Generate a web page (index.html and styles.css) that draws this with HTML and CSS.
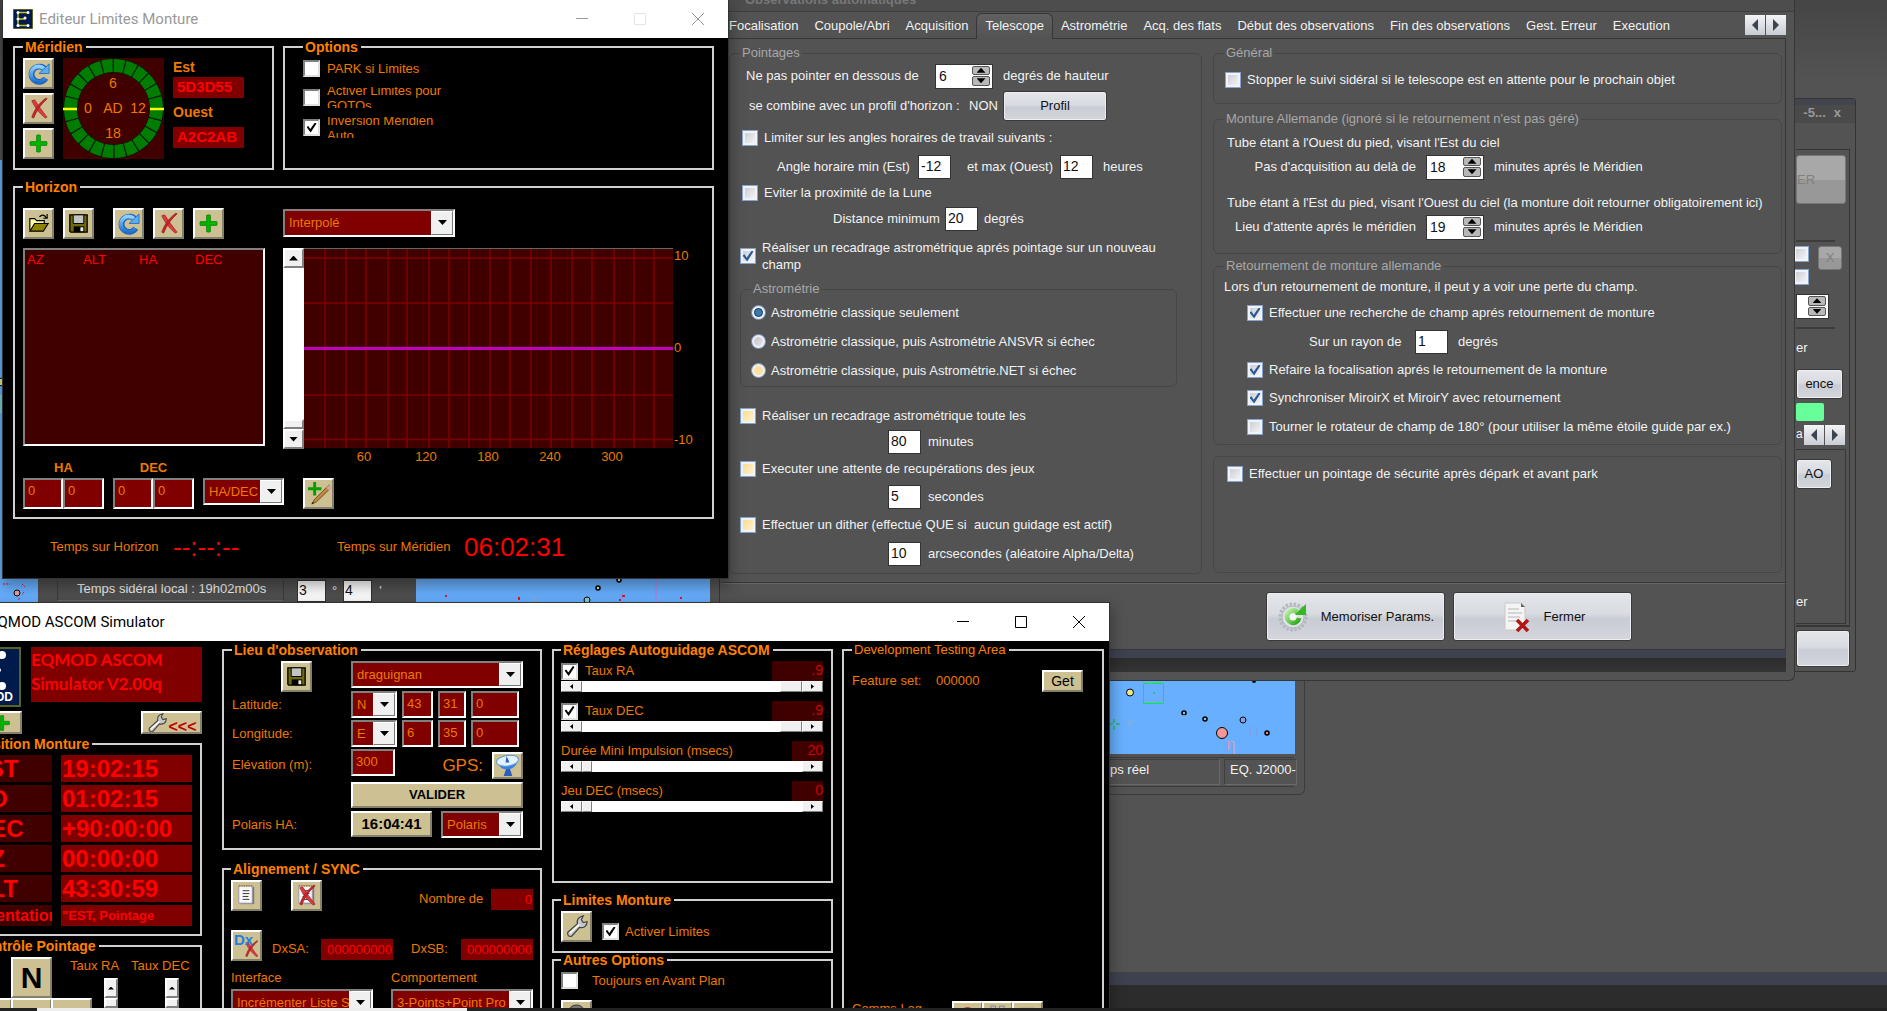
FILE: index.html
```html
<!DOCTYPE html>
<html lang="fr">
<head>
<meta charset="utf-8">
<title>EQMOD ASCOM Simulator</title>
<link rel="stylesheet" href="styles.css">
</head>
<body>
<svg class="defs" aria-hidden="true">
  <defs>
    <linearGradient id="g-blue" x1="0" y1="0" x2="0" y2="1"><stop offset="0" stop-color="#8fd0ff"/><stop offset="1" stop-color="#1f6fd0"/></linearGradient>
    <linearGradient id="g-green" x1="0" y1="0" x2="1" y2="1"><stop offset="0" stop-color="#b8f0a0"/><stop offset="1" stop-color="#2aa81a"/></linearGradient>
    <symbol id="i-refresh" viewBox="0 0 26 26"><path d="M20.500 9.500A8 8 0 1 0 20.500 18" fill="none" stroke="#1c62b8" stroke-width="6"/><path d="M20 9.500A8 8 0 1 0 20 18" fill="none" stroke="url(#g-blue)" stroke-width="4"/><path d="M24 3v10H13.500z" fill="#5aaef0" stroke="#1c62b8" stroke-width=".8"/></symbol>
    <symbol id="i-cross" viewBox="0 0 26 26"><path d="M6 5l3-1c4 6 8 12 13 18l-2 1C14 18 9 12 6 5z" fill="#e03a40" stroke="#8a1418" stroke-width=".6"/><path d="M22 3c-6 5-11 12-14 20l-2-1C9 13 15 6 21 2z" fill="#c8262c" stroke="#8a1418" stroke-width=".6"/></symbol>
    <symbol id="i-plus" viewBox="0 0 26 26"><path d="M11 4.500q2-1 4 0V11h6.500q1 2 0 4H15v6.500q-2 1-4 0V15H4.500q-1-2 0-4H11z" fill="#00b400" stroke="#007a00" stroke-width=".7"/></symbol>
    <symbol id="i-open" viewBox="0 0 26 26"><path d="M4 20V8h5l2 2h8v3" fill="#ffff9a" stroke="#000" stroke-width="1.200"/><path d="M4 21l5-8h14l-5 8z" fill="#8c8400" stroke="#000" stroke-width="1.200"/><path d="M14 6q4-4 7 1M22 3v4.500h-4" fill="none" stroke="#000" stroke-width="1.200"/></symbol>
    <symbol id="i-save" viewBox="0 0 26 26"><path d="M4 4h18v18H5l-1-1z" fill="#6f6a12" stroke="#000" stroke-width="1.400"/><path d="M7.500 4h11v9h-11z" fill="#c4c4c4" stroke="#000"/><path d="M8 16h11v6H8z" fill="#000"/><path d="M15 17h3v4h-3z" fill="#eee"/></symbol>
    <symbol id="i-pencil" viewBox="0 0 26 26"><path d="M9 1v14M2 8h14" stroke="#00a000" stroke-width="3"/><path d="M24 4L9 19l-3 5 5-2.500L25 8z" fill="#c08a40" stroke="#5a3a10" stroke-width=".8"/><path d="M24 4l-3 3 3 3 2-2z" fill="#d8a0a0"/><path d="M6 24l1-2 1.500 1z" fill="#000"/></symbol>
    <symbol id="i-wrench" viewBox="0 0 26 26"><path d="M4 19L14 10c-1-4 1-7 6-8l-2 4 2 3 4-1c0 5-4 7-8 6L8 23c-3 1-5-1-4-4z" fill="#c8c8c8" stroke="#444" stroke-width="1.300"/><path d="M6 20l10-9" stroke="#fff" stroke-width="1.500"/></symbol>
    <symbol id="i-note" viewBox="0 0 26 26"><path d="M7 4h14v18H7z" fill="#777"/><path d="M5 3h14v18H5z" fill="#f8f8f8" stroke="#99a"/><path d="M5 3h14" stroke="#a08040" stroke-width="2" stroke-dasharray="1.500 1"/><path d="M9 8h7M9 11h7M9 14h6M9 17h7" stroke="#333"/></symbol>
    <symbol id="i-dish" viewBox="0 0 26 26"><path d="M12 15l-3 9h9l-3-9z" fill="#2860b8"/><path d="M2 8q2 9 11 9t11-11z" fill="#3a80e0"/><ellipse cx="13" cy="8" rx="11.500" ry="5.500" transform="rotate(-8 13 8)" fill="#e4f2ff" stroke="#5a98d8"/><path d="M12 3l3 7h-4z" fill="#2860b8"/></symbol>
    <symbol id="i-gear" viewBox="0 0 32 32"><circle cx="16" cy="16" r="13" fill="none" stroke="#b4b7be" stroke-width="3" stroke-dasharray="2.500 1.600"/><circle cx="16" cy="16" r="11" fill="#dfe1e8" stroke="#b0b3ba"/><path d="M22 17a6 6 0 1 1-2-6" fill="none" stroke="url(#g-green)" stroke-width="5"/><path d="M29 3v11H17z" fill="#35b822"/><circle cx="16" cy="16" r="3.500" fill="#f6f6f8"/></symbol>
    <symbol id="i-doc" viewBox="0 0 32 32"><path d="M5 2h16l4 4v23H5q-3 1-4-1h4z" fill="#f4f4f4" stroke="#c8c8c8"/><path d="M21 2v4h4z" fill="#666"/><path d="M8 8h11M8 12h14M8 16h12M8 20h8" stroke="#ccc" stroke-width="1.500"/><path d="M17 19l11 11M28 19L17 30" stroke="#b01818" stroke-width="3.600"/></symbol>
    <symbol id="i-eq" viewBox="0 0 20 20"><path d="M.5.500h19v19H.5z" fill="#001a4c" stroke="#5a6420"/><path d="M15 3.500H5v13h10M5 10h7" fill="none" stroke="#c8c020" stroke-width="1.500"/><g fill="#fff"><circle cx="5" cy="3.500" r="1.500"/><circle cx="15" cy="3.500" r="1.500"/><circle cx="5" cy="10" r="1.500"/><circle cx="12" cy="9" r="1.500"/><circle cx="5" cy="16.500" r="1.500"/><circle cx="15" cy="16.500" r="1.500"/></g></symbol>
    <symbol id="i-min" viewBox="0 0 12 12"><path d="M0 5.500h12" stroke="currentColor"/></symbol>
    <symbol id="i-max" viewBox="0 0 12 12"><path d="M.5.500h11v11H.5z" fill="none" stroke="currentColor"/></symbol>
    <symbol id="i-close" viewBox="0 0 12 12"><path d="M0 0l12 12M12 0L0 12" stroke="currentColor"/></symbol>
  </defs>
</svg>

<main class="desktop">

  <!-- sky map showing between the windows -->
  <svg class="sky sky-left" viewBox="0 0 38 442" preserveAspectRatio="none" aria-hidden="true">
    <circle cx="2" cy="222" r="4" fill="#e8e890" stroke="#000"/><path d="M0 235h4v18H0z" fill="#80d0d0"/><circle cx="17" cy="433" r="3" fill="#f0a0a0" stroke="#000"/><path d="M3 424h7M22 424l3 3M24 432l-2 3M19 438v3" stroke="#f01030" stroke-dasharray="2 1"/>
  </svg>
  <section class="sidereal">
    <output class="sid-box">Temps sidéral local : 19h02m00s</output>
    <input class="white-in" aria-label="Degrés" value="3"><span>°</span>
    <input class="white-in" aria-label="Minutes" value="4"><span>'</span>
  </section>
  <svg class="sky sky-mid" viewBox="0 0 294 62" aria-hidden="true">
    <circle cx="182" cy="48" r="2" fill="#ddd" stroke="#000" stroke-width="1.500"/><circle cx="203" cy="40" r="2" fill="#ddd" stroke="#000" stroke-width="1.500"/><circle cx="171" cy="60" r="3" fill="#80d0d0" stroke="#000"/><path d="M240 38v24" stroke="#a090f0" stroke-width="2"/><path d="M30 55v2M103 57v3M206 56h3M203 60h2M265 57v2" stroke="#f01030" stroke-width="2"/><path d="M115 57l6 5M121 57l-6 5M0 43l4-4M0 43l4 4" stroke="#90b0c8"/>
  </svg>

  <section class="mapwin">
    <svg class="map" viewBox="0 0 205 133" aria-hidden="true">
      <circle cx="40" cy="71.500" r="3.500" fill="#e8e890" stroke="#000"/><path d="M53.500 62.500h20v20h-20z" fill="none" stroke="#00f020"/><path d="M63 72h2" stroke="#00c020"/><circle cx="94" cy="92" r="2" fill="#8cc" stroke="#000" stroke-width="1.500"/><circle cx="115" cy="98" r="2" fill="#8cc" stroke="#000" stroke-width="1.500"/><circle cx="153" cy="99" r="3" fill="#80a0e8" stroke="#000"/><circle cx="132" cy="112" r="5.500" fill="#f09898" stroke="#000"/><circle cx="177" cy="112" r="2" fill="#f08080" stroke="#000" stroke-width="1.500"/><path d="M24 98v4M24 105v4M20 103h3M26 103h4" stroke="#00c020"/><path d="M37 99l6 6M43 99l-6 6M91 96l3-2 3 2" stroke="#90b0c8" fill="none"/><circle cx="164" cy="60" r="2"/>
      <text x="157" y="115" class="star-blue">11</text><text x="136" y="129" class="star-red">η</text>
    </svg>
    <div class="statusbar"><span class="cell">ps réel</span><span class="cell">EQ. J2000-</span></div>
  </section>

  <section class="sidewin">
    <header><span>-5...</span><span>x</span></header>
    <div class="side-panel">
      <button class="dull tall" disabled>ER</button>
      <hr>
      <div class="side-checks">
        <div class="stack"><input type="checkbox" class="cb" aria-label="Option 1"><input type="checkbox" class="cb" aria-label="Option 2"></div>
        <button class="dull" disabled>X</button>
      </div>
      <span class="spin narrow"><input aria-label="Valeur" value=""><span class="ud"><button class="up" aria-label="Plus"></button><button class="dn" aria-label="Moins"></button></span></span>
      <hr>
      <span class="side-text">er</span>
      <button class="btn side-btn">ence</button>
      <div class="green"></div>
      <div class="side-nav"><span>a</span><button class="nav l" aria-label="Précédent"></button><button class="nav r" aria-label="Suivant"></button></div>
      <div class="side-sub"><button class="btn ao">AO</button><span class="side-text">er</span></div>
    </div>
    <button class="btn side-bottom" aria-label="Valider"></button>
  </section>

  <!-- automatic observations window -->
  <section class="obs">
    <header class="obs-title"><span>Observations automatiques</span></header>
    <nav class="tabs">
      <a href="#">Focalisation</a><a href="#">Coupole/Abri</a><a href="#">Acquisition</a><a href="#" class="on">Telescope</a><a href="#">Astrométrie</a><a href="#">Acq. des flats</a><a href="#">Début des observations</a><a href="#">Fin des observations</a><a href="#">Gest. Erreur</a><a href="#">Execution</a>
      <span class="tab-nav"><button class="nav l" aria-label="Onglet précédent"></button><button class="nav r" aria-label="Onglet suivant"></button></span>
    </nav>
    <div class="obs-page">
      <fieldset class="og pointages">
        <legend>Pointages</legend>
        <div class="row r-alt"><label for="alt">Ne pas pointer en dessous de</label><span class="spin"><input id="alt" value="6"><span class="ud"><button class="up" aria-label="Plus"></button><button class="dn" aria-label="Moins"></button></span></span><span>degrés de hauteur</span></div>
        <div class="row r-prof"><span>se combine avec un profil d'horizon :</span><span>NON</span><button class="btn">Profil</button></div>
        <label class="row opt in"><input type="checkbox" class="cb">Limiter sur les angles horaires de travail suivants :</label>
        <div class="row r-ang"><label for="amin">Angle horaire min (Est)</label><input id="amin" class="white-in" value="-12"><label for="amax">et max (Ouest)</label><input id="amax" class="white-in" value="12"><span>heures</span></div>
        <label class="row opt in"><input type="checkbox" class="cb">Eviter la proximité de la Lune</label>
        <div class="row r-dist"><label for="dist">Distance minimum</label><input id="dist" class="white-in" value="20"><span>degrés</span></div>
        <label class="row opt two"><input type="checkbox" class="cb" checked><span>Réaliser un recadrage astrométrique aprés pointage sur un nouveau<br>champ</span></label>
        <fieldset class="og astro">
          <legend>Astrométrie</legend>
          <label><input type="radio" name="astro" class="rb" checked>Astrométrie classique seulement</label>
          <label><input type="radio" name="astro" class="rb">Astrométrie classique, puis Astrométrie ANSVR si échec</label>
          <label><input type="radio" name="astro" class="rb hot">Astrométrie classique, puis Astrométrie.NET si échec</label>
        </fieldset>
        <label class="row opt"><input type="checkbox" class="cb hot">Réaliser un recadrage astrométrique toute les</label>
        <div class="row r-sub"><input class="white-in" aria-label="minutes" value="80"><span>minutes</span></div>
        <label class="row opt"><input type="checkbox" class="cb hot">Executer une attente de recupérations des jeux</label>
        <div class="row r-sub"><input class="white-in" aria-label="secondes" value="5"><span>secondes</span></div>
        <label class="row opt"><input type="checkbox" class="cb hot">Effectuer un dither (effectué QUE si&nbsp; aucun guidage est actif)</label>
        <div class="row r-sub"><input class="white-in" aria-label="arcsecondes" value="10"><span>arcsecondes (aléatoire Alpha/Delta)</span></div>
      </fieldset>
      <div class="obs-right">
        <fieldset class="og general"><legend>Général</legend>
          <label class="row opt"><input type="checkbox" class="cb">Stopper le suivi sidéral si le telescope est en attente pour le prochain objet</label>
        </fieldset>
        <fieldset class="og monture"><legend>Monture Allemande (ignoré si le retournement n'est pas géré)</legend>
          <div class="case"><p>Tube étant à l'Ouest du pied, visant l'Est du ciel</p>
            <div class="r-min"><label for="m1">Pas d'acquisition au delà de</label><span class="spin"><input id="m1" value="18"><span class="ud"><button class="up" aria-label="Plus"></button><button class="dn" aria-label="Moins"></button></span></span><span>minutes aprés le Méridien</span></div></div>
          <div class="case"><p>Tube étant à l'Est du pied, visant l'Ouest du ciel (la monture doit retourner obligatoirement ici)</p>
            <div class="r-min"><label for="m2">Lieu d'attente aprés le méridien</label><span class="spin"><input id="m2" value="19"><span class="ud"><button class="up" aria-label="Plus"></button><button class="dn" aria-label="Moins"></button></span></span><span>minutes aprés le Méridien</span></div></div>
        </fieldset>
        <fieldset class="og retour"><legend>Retournement de monture allemande</legend>
          <p>Lors d'un retournement de monture, il peut y a voir une perte du champ.</p>
          <label class="opt"><input type="checkbox" class="cb" checked>Effectuer une recherche de champ aprés retournement de monture</label>
          <div class="r-ray"><label for="ray">Sur un rayon de</label><input id="ray" class="white-in" value="1"><span>degrés</span></div>
          <label class="opt"><input type="checkbox" class="cb" checked>Refaire la focalisation aprés le retournement de la monture</label>
          <label class="opt"><input type="checkbox" class="cb" checked>Synchroniser MiroirX et MiroirY avec retournement</label>
          <label class="opt"><input type="checkbox" class="cb">Tourner le rotateur de champ de 180° (pour utiliser la même étoile guide par ex.)</label>
        </fieldset>
        <div class="og secu"><label class="opt"><input type="checkbox" class="cb">Effectuer un pointage de sécurité après dépark et avant park</label></div>
      </div>
    </div>
    <div class="obs-actions">
      <button class="btn"><svg width="32" height="32"><use href="#i-gear"/></svg>Memoriser Params.</button>
      <button class="btn"><svg width="32" height="32"><use href="#i-doc"/></svg>Fermer</button>
    </div>
    <footer class="obs-foot"></footer>
  </section>

  <!-- mount limits editor -->
  <section class="win editor">
    <header class="titlebar off"><svg width="20" height="20"><use href="#i-eq"/></svg><h1>Editeur Limites Monture</h1>
      <button aria-label="Réduire"><svg width="12" height="12"><use href="#i-min"/></svg></button><button class="faint" aria-label="Agrandir"><svg width="12" height="12"><use href="#i-max"/></svg></button><button aria-label="Fermer"><svg width="12" height="12"><use href="#i-close"/></svg></button></header>
    <div class="ed-body">
      <div class="ed-top">
        <fieldset class="gb meridien"><legend>Méridien</legend>
          <div class="mer">
            <div class="stack"><button class="tb" aria-label="Rafraîchir"><svg><use href="#i-refresh"/></svg></button><button class="tb" aria-label="Effacer"><svg><use href="#i-cross"/></svg></button><button class="tb" aria-label="Ajouter"><svg><use href="#i-plus"/></svg></button></div>
            <svg class="dial" width="101" height="101" viewBox="0 0 101 101"><path d="M0 0h101v101H0z" fill="#400000"/><circle cx="50.500" cy="50.500" r="43" fill="none" stroke="#001800" stroke-width="14"/><circle cx="50.500" cy="50.500" r="43" fill="none" stroke="#007c00" stroke-width="13" stroke-dasharray="10.060 1.200"/><path d="M0 51h14M87 51h14" stroke="#ff0" stroke-width="2.500"/><g class="dial-t"><text x="50" y="30">6</text><text x="25" y="55">0</text><text x="50" y="55">AD</text><text x="75" y="55">12</text><text x="50" y="80">18</text></g></svg>
            <div class="mer-vals"><b>Est</b><output class="red">5D3D55</output><b>Ouest</b><output class="red">A2C2AB</output></div>
          </div>
        </fieldset>
        <fieldset class="gb options"><legend>Options</legend>
          <label><input type="checkbox" class="wc"><span>PARK si Limites</span></label>
          <label><input type="checkbox" class="wc"><span>Activer Limites pour<br>GOTOs</span></label>
          <label><input type="checkbox" class="wc" checked><span>Inversion Méridien<br>Auto</span></label>
        </fieldset>
      </div>
      <fieldset class="gb horizon"><legend>Horizon</legend>
        <div class="hz">
          <div class="hz-left">
            <div class="toolbar"><button class="tb" aria-label="Ouvrir"><svg><use href="#i-open"/></svg></button><button class="tb" aria-label="Enregistrer"><svg><use href="#i-save"/></svg></button><i></i><button class="tb" aria-label="Rafraîchir"><svg><use href="#i-refresh"/></svg></button><button class="tb" aria-label="Effacer"><svg><use href="#i-cross"/></svg></button><button class="tb" aria-label="Ajouter"><svg><use href="#i-plus"/></svg></button></div>
            <div class="list"><table><tr><th>AZ</th><th>ALT</th><th>HA</th><th>DEC</th></tr></table></div>
            <div class="entry"><div><b>HA</b><span class="pair"><input class="ri" aria-label="HA heures" value="0"><input class="ri" aria-label="HA minutes" value="0"></span></div><div><b>DEC</b><span class="pair"><input class="ri" aria-label="DEC degrés" value="0"><input class="ri" aria-label="DEC minutes" value="0"></span></div><span class="combo c-hadec"><select aria-label="Coordonnées"><option>HA/DEC</option></select></span></div>
          </div>
          <div class="hz-right">
            <span class="combo c-interp"><select aria-label="Mode"><option>Interpolé</option></select></span>
            <div class="chart">
              <div class="vscroll"><button class="up" aria-label="Haut"></button><span></span><i></i><button class="dn" aria-label="Bas"></button></div>
              <svg class="plot" width="369" height="200" viewBox="0 0 369 200"><path d="M0 0h369v200H0z" fill="#400000"/><path d="M0 .5h369" stroke="#666"/><path d="M21 1v199M42 1v199M62 1v199M84 1v199M103 1v199M125 1v199M145 1v199M165 1v199M186 1v199M206 1v199M227 1v199M247 1v199M268 1v199M288 1v199M310 1v199M330 1v199M350 1v199M0 10h369M0 55h369M0 147h369M0 191.500h369" stroke="#800000" stroke-width="1.500"/><path d="M0 100.500h369" stroke="#c000c0" stroke-width="3"/></svg>
              <div class="ylab"><span>10</span><span>0</span><span>-10</span></div>
              <div class="xlab"><span>60</span><span>120</span><span>180</span><span>240</span><span>300</span></div>
            </div>
            <button class="tb pen" aria-label="Modifier"><svg><use href="#i-pencil"/></svg></button>
          </div>
        </div>
      </fieldset>
      <div class="ed-foot"><span>Temps sur Horizon</span><output>--:--:--</output><span>Temps sur Méridien</span><output>06:02:31</output></div>
    </div>
  </section>

  <!-- EQMOD driver window -->
  <section class="win eqmod">
    <header class="titlebar"><svg width="20" height="20"><use href="#i-eq"/></svg><h1>EQMOD ASCOM Simulator</h1>
      <button aria-label="Réduire"><svg width="12" height="12"><use href="#i-min"/></svg></button><button aria-label="Agrandir"><svg width="12" height="12"><use href="#i-max"/></svg></button><button aria-label="Fermer"><svg width="12" height="12"><use href="#i-close"/></svg></button></header>
    <div class="eq-body">
      <div class="col-a">
        <div class="brand"><svg class="logo" width="60" height="60" viewBox="0 0 60 60"><path d="M1 1h58v58H1z" fill="#001a4c" stroke="#5a6420" stroke-width="2"/><g fill="#fff"><circle cx="41" cy="8" r="4"/><circle cx="41" cy="39" r="4"/><circle cx="38" cy="23" r="2"/></g><text x="52" y="54" text-anchor="end">EQMOD</text></svg><h2>EQMOD ASCOM<br>Simulator V2.00q</h2></div>
        <div class="brand-tools"><button class="tb flat" aria-label="Ajouter"><svg><use href="#i-plus"/></svg></button><button class="tb flat tools" aria-label="Réglages"><svg><use href="#i-wrench"/></svg><b>&lt;&lt;&lt;</b></button></div>
        <fieldset class="gb position"><legend>Position Monture</legend>
          <table><tr><th>LST</th><td>19:02:15</td></tr><tr><th>AD</th><td>01:02:15</td></tr><tr><th>DEC</th><td>+90:00:00</td></tr><tr><th>AZ</th><td>00:00:00</td></tr><tr><th>ALT</th><td>43:30:59</td></tr><tr class="small"><th>Orientation</th><td>"EST, Pointage</td></tr></table>
        </fieldset>
        <fieldset class="gb controle"><legend>Contrôle Pointage</legend>
          <div class="ctl">
            <div class="pad"><i></i><button class="tb big">N</button><i></i><button class="tb big">E</button><button class="tb big stop" aria-label="Stop"></button><button class="tb big">O</button></div>
            <div class="rate"><span>Taux RA</span><div class="vscroll slim"><button class="up" aria-label="Plus"></button><i></i><span></span></div></div>
            <div class="rate"><span>Taux DEC</span><div class="vscroll slim"><button class="up" aria-label="Plus"></button><i></i><span></span></div></div>
          </div>
        </fieldset>
      </div>
      <div class="col-b">
        <fieldset class="gb lieu"><legend>Lieu d'observation</legend>
          <div class="lieu-grid">
            <button class="tb site-save" aria-label="Enregistrer"><svg><use href="#i-save"/></svg></button><span class="combo"><select aria-label="Site"><option>draguignan</option></select></span>
            <span>Latitude:</span><div class="coord"><span class="combo"><select aria-label="Nord/Sud"><option>N</option></select></span><input class="ri" aria-label="Degrés" value="43"><input class="ri" aria-label="Minutes" value="31"><input class="ri" aria-label="Secondes" value="0"></div>
            <span>Longitude:</span><div class="coord"><span class="combo"><select aria-label="Est/Ouest"><option>E</option></select></span><input class="ri" aria-label="Degrés" value="6"><input class="ri" aria-label="Minutes" value="35"><input class="ri" aria-label="Secondes" value="0"></div>
            <label for="elev">Elévation (m):</label><div class="elev"><input class="ri" id="elev" value="300"><span class="gps">GPS:</span><button class="tb" aria-label="GPS"><svg><use href="#i-dish"/></svg></button></div>
            <i></i><button class="tb word">VALIDER</button>
            <span class="pol-label">Polaris HA:</span><div class="polaris"><button class="tb word clock">16:04:41</button><span class="combo"><select aria-label="Etoile"><option>Polaris</option></select></span></div>
          </div>
        </fieldset>
        <fieldset class="gb align"><legend>Alignement / SYNC</legend>
          <div class="al-1"><button class="tb" aria-label="Liste"><svg><use href="#i-note"/></svg></button><button class="tb over" aria-label="Effacer la liste"><svg viewBox="0 0 26 26"><use href="#i-note"/><use href="#i-cross"/></svg></button><span>Nombre de</span><output class="red">0</output></div>
          <div class="al-2"><button class="tb dx" aria-label="Effacer Dx"><b>Dx</b><svg><use href="#i-cross"/></svg></button><span>DxSA:</span><output class="red">000000000</output><span>DxSB:</span><output class="red">000000000</output></div>
          <div class="al-3"><label>Interface<span class="combo"><select><option>Incrémenter Liste S</option></select></span></label><label>Comportement<span class="combo"><select><option>3-Points+Point Pro</option></select></span></label></div>
        </fieldset>
      </div>
      <div class="col-c">
        <fieldset class="gb guide"><legend>Réglages Autoguidage ASCOM</legend>
          <div class="g-row"><label><input type="checkbox" class="wc" checked>Taux RA</label><output class="w-l">.9</output></div>
          <div class="hscroll"><button class="l" aria-label="Moins"></button><input type="range" class="wide" aria-label="Taux RA" min="0" max="10" value="10"><button class="r" aria-label="Plus"></button></div>
          <div class="g-row"><label><input type="checkbox" class="wc" checked>Taux DEC</label><output class="w-l">.9</output></div>
          <div class="hscroll"><button class="l" aria-label="Moins"></button><input type="range" class="wide" aria-label="Taux DEC" min="0" max="10" value="10"><button class="r" aria-label="Plus"></button></div>
          <div class="g-row"><span>Durée Mini Impulsion (msecs)</span><output>20</output></div>
          <div class="hscroll"><button class="l" aria-label="Moins"></button><input type="range" aria-label="Durée" min="0" max="10" value="0"><button class="r" aria-label="Plus"></button></div>
          <div class="g-row"><span>Jeu DEC (msecs)</span><output>0</output></div>
          <div class="hscroll"><button class="l" aria-label="Moins"></button><input type="range" aria-label="Jeu DEC" min="0" max="10" value="0"><button class="r" aria-label="Plus"></button></div>
        </fieldset>
        <fieldset class="gb limites"><legend>Limites Monture</legend>
          <div><button class="tb" aria-label="Editer"><svg><use href="#i-wrench"/></svg></button><label><input type="checkbox" class="wc" checked>Activer Limites</label></div>
        </fieldset>
        <fieldset class="gb autres"><legend>Autres Options</legend>
          <label><input type="checkbox" class="wc">Toujours en Avant Plan</label>
          <button class="tb" aria-label="Options"><svg viewBox="0 0 26 26"><circle cx="13" cy="11" r="9" fill="#777" stroke="#333"/></svg></button>
        </fieldset>
      </div>
      <fieldset class="gb dev"><legend>Development Testing Area</legend>
        <div class="feat"><span>Feature set:</span><span>000000</span><button class="tb get">Get</button></div>
        <div class="comms"><span>Comms Log</span><button class="tb" aria-label="Enregistrer"><svg viewBox="0 0 26 26"><circle cx="13" cy="10" r="7" fill="#b04848"/></svg></button><button class="tb" aria-label="Pause"><svg viewBox="0 0 26 26"><path d="M6 2h5v16H6zM15 2h5v16h-5z" fill="#bbb" stroke="#888"/></svg></button><button class="tb" aria-label="Stop"><svg viewBox="0 0 26 26"><path d="M6 4h14v14H6z" fill="#b04848"/></svg></button></div>
      </fieldset>
    </div>
  </section>

  <footer class="taskbar"><span></span></footer>
</main>
</body>
</html>
```
FILE: styles.css
```css
* { box-sizing: border-box; }
html, body { height: 100%; }
body { margin: 0; overflow: hidden; font: 13px/18px "Liberation Sans", Arial, sans-serif; color: #f2f2f2; }
p, h1, h2 { margin: 0; font: inherit; }
button, input, select { font: inherit; color: inherit; margin: 0; padding: 0; border: 0; border-radius: 0; }
a { color: inherit; text-decoration: none; }
i { display: block; }
svg { display: block; flex: none; }
.defs { position: absolute; width: 0; height: 0; }

.desktop { position: relative; height: 100vh; overflow: hidden; background: linear-gradient(#454545, #535353 80px); }
.desktop::before { content: ""; position: absolute; left: 0; right: 0; bottom: 3px; height: 35px; border-top: 1px solid #444; background: linear-gradient(#3e4250 0 12px, #2c2c2c 12px); }

/* sky map */
.sky { position: absolute; background: #68b0ff; }
.sky-left { left: 0; top: 160px; width: 38px; height: 442px; }
.sky-mid { left: 416px; top: 540px; width: 294px; height: 62px; }
.sidereal { position: absolute; left: 38px; top: 578px; width: 378px; height: 25px; display: flex; align-items: center; padding-left: 19px; background: #505050; }
.sidereal span { width: 17px; text-align: center; }
.sid-box { width: 227px; height: 20px; padding-left: 19px; margin-right: 13px; border: 1px solid #3c3c3c; border-top: 0; border-bottom-color: #666; line-height: 16px; }
.sidereal .white-in { width: 29px; height: 22px; padding-left: 1px; }

.mapwin { position: absolute; left: 1079px; top: 600px; width: 226px; padding: 20px 10px 7px; border: 1px solid #3c3c3c; border-radius: 0 0 6px 6px; background: #535353; }
.map { width: 205px; height: 133px; background: #68b0ff; }
.star-blue { font: 14px "Liberation Serif", serif; fill: #80a0e8; }
.star-red { font: 18px "Liberation Serif", serif; fill: #d89ab8; }
.statusbar { display: grid; grid-template-columns: 130px 1fr; gap: 4px; margin-top: 3px; padding: 1px 0; border: solid #3c3c3c; border-width: 1px 0; }
.cell { height: 26px; line-height: 20px; border: 1px solid #3f3f3f; border-right-color: #6a6a6a; border-bottom-color: #6a6a6a; padding-left: 5px; white-space: nowrap; }
.cell:first-child { padding-left: 19px; }

/* partly covered window on the right */
.sidewin { position: absolute; left: 1780px; top: 98px; width: 76px; height: 574px; padding: 0 5px 0 15px; background: #535353; border: 1px solid #333; border-radius: 0 3px 3px 0; }
.sidewin header { display: flex; justify-content: flex-end; gap: 8px; height: 50px; padding: 5px 14px; margin: 0 -5px 0 -15px; color: #999; font-weight: bold; background: linear-gradient(#42444e 0 6px, #4a4a4a 6px 24px, #535353 24px); }
.side-panel { height: 478px; border: solid #363636; border-width: 1px 1px 2px 0; padding: 5px 0; }
.sidewin hr { border: 0; border-top: 2px solid #3c3c3c; margin: 0 14px 0 0; }
.dull { background: linear-gradient(#a8a8a8 50%, #989898 50%); color: #808080; border: 1px solid #777; border-radius: 3px; text-align: left; }
.tall { width: 50px; height: 49px; margin-bottom: 36px; }
.side-checks { display: flex; gap: 9px; margin: 4px 0 9px -3px; }
.side-checks .stack { gap: 7px; }
.side-checks .dull { width: 24px; height: 24px; text-align: center; }
.spin.narrow { width: 33px; margin-bottom: 8px; }
.side-text { display: block; margin: 11px 0 13px; line-height: 16px; }
.side-btn { width: 47px; height: 30px; }
.green { width: 28px; height: 18px; margin-top: 4px; background: #66ff9a; border-radius: 2px; }
.side-nav { display: flex; gap: 1px; margin: 4px 0; height: 20px; }
.side-nav span { width: 7px; font-size: 12px; }
.side-sub { height: 175px; width: 50px; padding-top: 9px; border: solid #363636; border-width: 1px 1px 1px 0; }
.ao { width: 36px; height: 30px; }
.side-sub .side-text { margin-top: 105px; }
.side-bottom { width: 54px; height: 37px; margin-top: 3px; }

/* automatic observations window */
.obs { position: absolute; left: 719px; top: 0; width: 1076px; background: #535353; border: 1px solid #363636; border-top: 0; border-radius: 0 0 6px 0; padding: 0 8px 8px 2px; }
.obs-title { height: 12px; overflow: hidden; border-bottom: 1px solid #3e3e3e; margin: 0 -8px 0 -2px; color: #777; line-height: 0; padding-left: 25px; font-weight: bold; background: #4d4d4d; }
.obs-title span { display: block; }
.tabs { display: flex; height: 27px; padding-top: 1px; border-bottom: 1px solid #363636; line-height: 26px; white-space: nowrap; }
.tabs a { padding: 0 8px; flex: none; }
.tabs a:first-child { padding-left: 7px; }
.tabs .on { border: 1px solid #363636; border-bottom: 0; border-radius: 6px 6px 0 0; background: linear-gradient(#606060, #535353); height: 26px; line-height: 24px; }
.tab-nav { margin-left: auto; display: flex; gap: 1px; padding-top: 2px; }
.nav { width: 20px; height: 20px; background: linear-gradient(#f4f4f6, #c8ccd4); display: grid; place-items: center; flex: none; }
.nav::before { content: ""; width: 6px; height: 12px; background: #3c4450; clip-path: polygon(0 50%, 100% 0, 100% 100%); }
.nav.r::before { clip-path: polygon(100% 50%, 0 0, 0 100%); }
.obs-page { display: grid; grid-template-columns: 473px 1fr; gap: 11px; padding: 5px 3px 8px 7px; border-right: 1px solid #363636; }
.og { min-width: 0; margin: 0; border: 1px solid #464646; border-radius: 6px; padding: 0 10px; }
.og legend { color: #a8a8a8; padding: 0 2px; line-height: 18px; white-space: nowrap; }
.og label, .og p, .og span { white-space: nowrap; }
.row { display: grid; align-items: center; }
.opt { display: flex; align-items: center; gap: 6px; }
.pointages { display: grid; grid-template-rows: 28px 32px 32px 26px 26px 26px 48px 121px 29px 23px 32px 23px 34px 16px; height: 530px; align-content: start; }
.opt.in { padding-left: 2px; }
.two { line-height: 17px; }
.r-alt { grid-template-columns: 189px 68px 1fr; padding-left: 6px; }
.r-prof { grid-template-columns: 220px 34px 104px; padding-left: 9px; }
.r-prof .btn { height: 30px; }
.r-ang { grid-template-columns: 141px 49px 93px 43px 1fr; padding-left: 37px; }
.r-dist { grid-template-columns: 112px 39px 1fr; padding-left: 93px; }
.r-sub { grid-template-columns: 40px 1fr; padding-left: 148px; }
.astro { height: 107px; width: 437px; display: grid; align-content: start; grid-auto-rows: 29px; }
.astro label { display: flex; align-items: center; gap: 5px; }
.obs-right { display: grid; align-content: start; grid-template-rows: 66px 147px 199px 118px; }
.general { height: 60px; }
.general .row { height: 36px; padding-left: 1px; }
.monture { height: 144px; padding-top: 2px; }
.case { display: grid; grid-template-rows: 25px 24px; align-items: center; margin-bottom: 11px; padding-left: 3px; }
.r-min { display: grid; grid-template-columns: 199px 68px 1fr; align-items: center; }
.r-min label { justify-self: end; padding-right: 10px; }
.retour { height: 188px; display: grid; grid-template-rows: 24px 28px 30px 26px 30px 28px; align-items: center; align-content: start; }
.retour .opt { padding-left: 23px; }
.r-ray { display: grid; grid-template-columns: 106px 43px 1fr; padding-left: 85px; align-items: center; }
.secu { height: 117px; padding: 8px 13px; }
.white-in { width: 33px; height: 24px; background: #fff; color: #111; border: 1px solid #333; padding: 0 0 2px 2px; min-width: 0; font-size: 14px; }
.spin { display: flex; width: 58px; height: 25px; background: #fff; border: 1px solid #333; padding: 1px 2px 2px 0; }
.spin input { flex: 1; min-width: 0; width: 0; color: #111; background: #fff; padding-left: 3px; font-size: 14px; }
.ud { display: grid; width: 18px; gap: 1px; }
.ud button { background: #b8b8b8; border: 1px solid #555; border-radius: 2px; display: grid; place-items: center; }
.up::before, .dn::before { content: ""; width: 9px; height: 5px; background: #000; clip-path: polygon(50% 0, 100% 100%, 0 100%); }
.dn::before { clip-path: polygon(0 0, 100% 0, 50% 100%); }
.cb, .rb, .wc { appearance: none; flex: none; display: grid; place-items: center; }
.cb { width: 16px; height: 16px; background: linear-gradient(135deg, #c4c8d0, #fafafa); border: 1px solid #88a4cc; box-shadow: inset 0 0 0 2px #f0f4fa; }
.cb.hot { background: linear-gradient(135deg, #fbd98a, #fff6da); }
.cb:checked::before, .wc:checked::before { content: ""; width: 11px; height: 11px; background: #2c5a94; clip-path: polygon(0 45%, 18% 35%, 38% 65%, 84% 0, 100% 10%, 42% 100%); }
.rb { width: 15px; height: 15px; border-radius: 50%; background: linear-gradient(135deg, #b8bcc4, #eee); border: 1px solid #7f9cc4; box-shadow: inset 0 0 0 2px #eef2f8; }
.rb.hot { background: #fce0a0; }
.rb:checked::before { content: ""; width: 7px; height: 7px; border-radius: 50%; background: #3c78b0; border: 1px solid #1a3c68; }
.btn { display: flex; align-items: center; justify-content: center; color: #111; border-radius: 3px; border: 1px solid #3a3a3a; background: linear-gradient(#e4e6ea, #d8dbe0 45%, #c8ccd4 55%, #d4d6dc); box-shadow: inset 0 0 0 1px #eceef2; }
.obs-actions { display: flex; gap: 8px; height: 68px; padding: 9px 0 9px 544px; border: solid #363636; border-width: 1px 1px 1px 0; box-shadow: inset 0 1px #666; }
.obs-actions .btn { width: 179px; height: 49px; gap: 12px; }
.obs-foot { height: 22px; background: linear-gradient(#3e4250 0 8px, #2c2c2c 8px, #343434); }

/* black windows */
.win { position: absolute; background: #000; color: #ee7800; font: 13px/16px "Liberation Sans", Arial, sans-serif; box-shadow: 0 0 0 1px #333, 0 6px 14px 2px rgba(0,0,0,.35); overflow: hidden; }
.titlebar { display: flex; align-items: center; height: 38px; padding: 0 1px 0 10px; background: #fff; color: #000; }
.titlebar h1 { flex: 1; padding-left: 6px; font: 15px/20px Roboto, sans-serif; }
.titlebar.off { color: #999; }
.titlebar button { width: 58px; height: 38px; background: none; display: grid; place-items: center; }
.titlebar .faint { color: #e4e4e4; }
.gb { min-width: 0; margin: 0; border: 2px solid #d0d0d0; padding: 2px 8px; }
.gb legend { padding: 0 3px 0 2px; font-weight: bold; font-size: 14px; line-height: 16px; color: #ff8000; white-space: nowrap; }
.tb { width: 31px; height: 31px; background: #cdc193; color: #000; border: 2px solid; border-color: #fff #85806a #85806a #fff; display: flex; align-items: center; justify-content: center; flex: none; overflow: hidden; }
.tb svg { width: 25px; height: 25px; }
.stack { display: grid; gap: 4px; }
.red { background: #800000; color: #ff0000; }
.wc { width: 17px; height: 17px; background: #fff; border: 2px solid; border-color: #808080 #e0e0e0 #e0e0e0 #808080; }
.wc:checked::before { width: 10px; height: 10px; background: #000; }
.ri { min-width: 0; width: 100%; height: 27px; background: #800000; color: #ee7800; border: 2px solid; border-color: #808080 #fff #fff #808080; padding: 0 0 3px 3px; }
.combo { position: relative; display: block; height: 27px; border: 2px solid; border-color: #808080 #fff #fff #808080; background: #800000; }
.combo select { appearance: none; width: 100%; height: 100%; background: none; color: #ee7800; padding: 0 20px 0 4px; overflow: hidden; }
.combo::before { content: ""; position: absolute; right: 0; top: 0; bottom: 0; width: 20px; background: #f0f0f0; border: 1px solid; border-color: #fff #777 #777 #fff; pointer-events: none; }
.combo::after { content: ""; position: absolute; right: 6px; top: 9px; width: 9px; height: 5px; background: #000; clip-path: polygon(0 0, 100% 0, 50% 100%); pointer-events: none; }

.editor { left: 3px; top: 0; width: 725px; height: 578px; }
.ed-body { padding: 1px 14px 0 10px; }
.ed-top { display: grid; grid-template-columns: 261px 1fr; gap: 9px; }
.meridien, .options { height: 131px; }
.meridien { padding-top: 3px; }
.mer { display: flex; gap: 9px; }
.mer-vals { display: grid; grid-template-rows: 17px 24px 26px 24px; width: 71px; align-items: center; }
.mer-vals b { font-size: 14px; }
.mer-vals .red { font: bold 15px/20px "Liberation Sans", sans-serif; height: 21px; padding-left: 4px; }
.dial-t { font-size: 14px; fill: #ee7800; text-anchor: middle; }
.options { padding: 0 18px; display: grid; grid-template-rows: 27px 31px 29px; align-content: start; }
.options label { display: flex; align-items: center; gap: 7px; line-height: 15px; }
.options label span { max-height: 21px; overflow: hidden; display: grid; align-content: center; }
.horizon { height: 340px; margin-top: 9px; padding-top: 13px; }
.hz { display: grid; grid-template-columns: 260px 1fr; }
.toolbar { display: flex; gap: 9px; height: 40px; }
.toolbar i { width: 1px; }
.list { width: 242px; height: 198px; background: #400000; border: 2px solid; border-color: #808080 #fff #fff #808080; }
.list table { border-collapse: collapse; table-layout: fixed; width: 224px; margin-left: 2px; }
.list th { padding: 1px 0; text-align: left; font-weight: normal; color: #f00; line-height: 18px; }
.entry { display: flex; gap: 9px; align-items: flex-end; height: 63px; }
.entry b { display: block; text-align: center; line-height: 20px; }
.pair { display: grid; grid-template-columns: 40px 41px; height: 31px; }
.pair .ri { height: 31px; padding-bottom: 6px; }
.entry .combo { width: 81px; margin-bottom: 4px; flex: none; }
.entry select { padding-right: 0; }
.c-interp { width: 172px; height: 28px; margin: 1px 0 11px; }
.chart { display: grid; grid-template-columns: 21px 369px 1fr; grid-template-rows: 201px 20px; }
.vscroll { display: flex; flex-direction: column; background: #fff; }
.vscroll span { flex: 1; }
.vscroll button, .vscroll i { background: #f0f0f0; border: 2px solid; border-color: #fff #808080 #808080 #fff; height: 20px; display: grid; place-items: center; }
.vscroll i { height: 10px; }
.ylab { display: flex; flex-direction: column; justify-content: space-between; padding-left: 1px; height: 200px; }
.xlab { grid-column: 2; display: grid; grid-template-columns: repeat(5, 62px); padding-left: 29px; text-align: center; line-height: 16px; }
.pen { margin: 9px 0 0 20px; }
.ed-foot { display: grid; grid-template-columns: 123px 164px 127px 1fr; align-items: center; height: 52px; padding-left: 37px; margin-top: 2px; }
.ed-foot output { color: #f00; font-size: 26px; line-height: 28px; }

.eqmod { left: -47px; top: 603px; bottom: 3px; width: 1156px; }
.eq-body { display: grid; grid-template-columns: 249px 320px 281px 261px; column-gap: 10px; padding: 1px 0 0 10px; }
.col-a { width: 239px; padding-top: 5px; }
.brand { display: grid; grid-template-columns: 60px 171px; gap: 10px; margin-left: -2px; }
.logo text { font: bold 12px "Liberation Sans", sans-serif; fill: #fff; }
.brand h2 { height: 55px; padding-top: 1px; background: #800000; color: #f00; font: bold 17px/24px "Comic Sans MS", Lato, sans-serif; }
.brand-tools { display: flex; justify-content: space-between; margin-top: 4px; padding-left: 18px; }
.flat { width: 41px; height: 23px; }
.tools { width: 61px; }
.flat svg { width: 22px; height: 22px; }
.flat b { color: #c00000; font-size: 16px; line-height: 14px; padding-top: 8px; }
.position { height: 200px; margin-top: 2px; padding-top: 2px; }
.position table { border-collapse: separate; border-spacing: 0 3px; table-layout: fixed; width: 219px; margin-top: -2px; }
.position th { width: 88px; height: 27px; padding: 0; background: #400000; border-right: 9px solid #000; color: #f00; text-align: left; font-size: 24px; line-height: 27px; overflow: hidden; }
.position td { height: 27px; padding: 0 0 0 1px; background: #800000; color: #f00; font-size: 24px; font-weight: bold; line-height: 27px; }
.position .small th, .position .small td { height: 21px; line-height: 18px; white-space: nowrap; }
.position .small th { font-size: 16px; }
.position .small td { font-size: 13px; }
.controle { height: 120px; margin-top: 2px; overflow: hidden; }
.ctl { display: flex; }
.pad { display: grid; grid-template-columns: repeat(3, 40px); margin: 1px -21px 0 -2px; }
.big { width: 41px; height: 41px; font-size: 30px; font-weight: bold; }
.stop::before { content: ""; width: 20px; height: 20px; border-radius: 50%; background: #a00000; }
.rate { display: grid; grid-template-rows: 22px 60px; width: 66px; white-space: nowrap; }
.rate > span { line-height: 20px; }
.slim { width: 14px; margin-left: 34px; }
.slim .up::before { width: 6px; height: 3px; }

.lieu { height: 208px; }
.lieu-grid { display: grid; grid-template-columns: 119px 172px; grid-template-rows: 30px 29px 29px 32px 30px 28px; align-items: start; margin-top: 1px; }
.lieu-grid > span:not(.combo) { line-height: 28px; }
.lieu-grid > label { line-height: 32px; }
.lieu-grid > .pol-label { line-height: 22px; }
.site-save { margin-left: 49px; }
.coord { display: grid; grid-template-columns: 46px 31px 28px 48px; gap: 5px; }
.coord select { padding-right: 0; }
.elev { display: grid; grid-template-columns: 44px 87px 31px; column-gap: 5px; }
.gps { font-size: 17px; line-height: 34px; justify-self: end; padding-right: 4px; }
.elev .tb { height: 27px; margin-top: 3px; }
.word { width: 100%; height: 26px; font-weight: bold; margin-top: 1px; }
.clock { font-size: 15px; margin: 0; }
.polaris { display: grid; grid-template-columns: 81px 82px; gap: 9px; }
.align { height: 160px; margin-top: 11px; padding: 2px 7px; }
.al-1 { display: grid; grid-template-columns: 60px 128px 72px 42px; align-items: center; height: 32px; }
.align .red { height: 21px; line-height: 21px; text-align: right; padding-right: 1px; }
.al-1 .red, .al-1 span { margin-top: 8px; }
.al-2 { display: grid; grid-template-columns: 41px 49px 72px 18px 50px 72px; align-items: center; height: 32px; margin-top: 18px; }
.al-2 span:nth-of-type(2) { grid-column: 5; }
.al-2 .red, .al-2 span { margin-top: 8px; }
.dx { position: relative; }
.dx b { position: absolute; left: 1px; top: 0; font-size: 15px; color: #2080e0; }
.dx svg { width: 20px; height: 20px; margin: 8px -8px 0 0; }
.al-3 { display: grid; grid-template-columns: 142px 142px; gap: 18px; margin-top: 9px; }
.al-3 .combo { margin-top: 3px; }

.guide { height: 241px; padding-top: 3px; padding-left: 7px; }
.g-row { display: flex; justify-content: space-between; align-items: center; height: 20px; margin-top: 9px; }
.g-row:first-of-type { margin-top: 0; }
.g-row label { display: flex; align-items: center; gap: 7px; }
.g-row output { background: #400000; color: #d00000; width: 31px; height: 20px; line-height: 18px; text-align: right; font-size: 14px; }
.g-row .w-l { width: 51px; }
.hscroll { display: grid; grid-template-columns: 21px 1fr 21px; height: 11px; background: #fff; overflow: hidden; }
.hscroll button, .hscroll input::-webkit-slider-thumb { background: #f0f0f0; border: 1px solid; border-color: #fff #808080 #808080 #fff; }
.hscroll button { display: grid; place-items: center; }
.hscroll button::before { content: ""; width: 3px; height: 5px; background: #000; clip-path: polygon(0 50%, 100% 0, 100% 100%); }
.hscroll .r::before { clip-path: polygon(100% 50%, 0 0, 0 100%); }
.hscroll input { appearance: none; min-width: 0; width: 100%; height: 11px; background: #fff; }
.hscroll input::-webkit-slider-thumb { appearance: none; width: 10px; height: 11px; }
.hscroll .wide::-webkit-slider-thumb { width: 22px; }
.limites { height: 61px; margin-top: 9px; padding: 3px 7px; }
.limites div { display: flex; gap: 10px; }
.limites label { display: flex; align-items: center; gap: 6px; margin-top: 10px; }
.autres { height: 100px; margin-top: -1px; padding: 4px 7px; }
.autres label { display: flex; align-items: center; gap: 14px; margin-bottom: 11px; }
.dev { height: 380px; margin-left: -1px; padding-bottom: 0; }
.dev legend { font-weight: normal; font-size: 13px; }
.feat { display: grid; grid-template-columns: 84px 106px 41px; align-items: center; margin-top: 10px; }
.get { width: 41px; height: 22px; font-size: 14px; }
.comms { display: grid; grid-template-columns: 100px 30px 30px 30px; margin-top: 309px; }

.taskbar { position: absolute; left: 0; right: 0; bottom: 0; height: 3px; background: #222; }
.taskbar span { display: block; width: 430px; height: 3px; margin-left: 37px; background: #eee; }
```
